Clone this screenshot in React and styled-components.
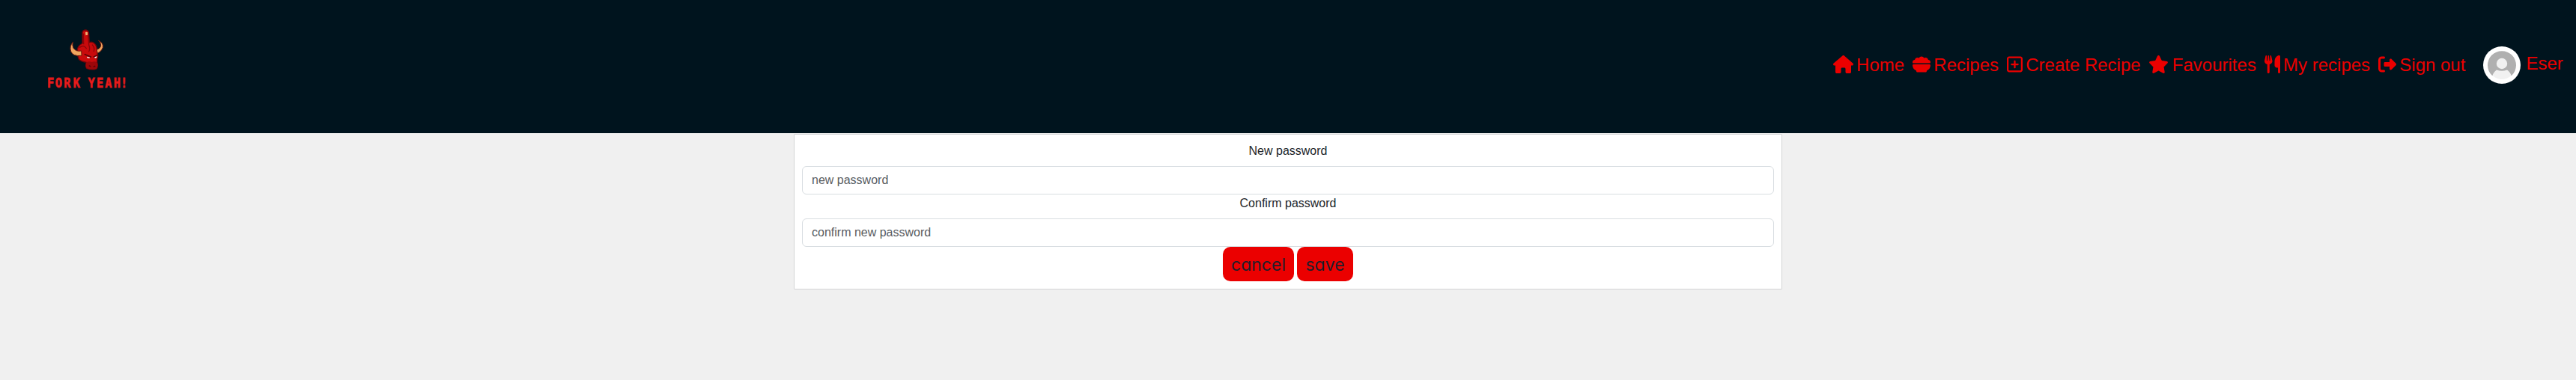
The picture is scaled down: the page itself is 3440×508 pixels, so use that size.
import React from 'react';
import styled, { createGlobalStyle } from 'styled-components';
import { FaHouse, FaBowlFood, FaRegSquarePlus, FaStar, FaUtensils, FaRightFromBracket } from 'react-icons/fa6';

const GlobalStyle = createGlobalStyle`
  *, *::before, *::after { box-sizing: border-box; }
  body {
    margin: 0;
    min-height: 100vh;
    background: #f0f0f0;
    color: #212529;
    font: 400 16px/24px "Liberation Sans", Arial, sans-serif;
  }
`;

const Header = styled.header`
  height: 178px;
  display: flex;
  justify-content: space-between;
  align-items: flex-start;
  background: #00141e;
  color: #eb0000;
`;

const LogoImage = styled.svg`
  width: 160px;
  height: 120px;
  margin: 20px 0 0 40px;
`;

const LogoText = styled.text`
  font: 700 18px "DejaVu Sans Mono", monospace;
  fill: #ed1c1c;
  stroke: #d5181a;
  stroke-width: 0.8px;
  text-anchor: middle;
`;

const Nav = styled.nav`
  display: flex;
  align-items: center;
  gap: 10.7px;
  height: 50px;
  margin: 62px 17.2px 0 0;
  font-size: 24px;
  line-height: 36px;
`;

const NavLink = styled.a`
  display: flex;
  align-items: center;
  gap: 4.5px;
  color: inherit;
  white-space: nowrap;

  svg {
    flex: none;
    width: ${(p) => p.$iconWidth}px;
    height: 24px;
    margin-bottom: 2px;
  }
`;

const Profile = styled.a`
  display: flex;
  align-items: center;
  gap: 7.4px;
  margin-left: 13px;
`;

const ProfileName = styled.span`
  padding-bottom: 4px;
`;

const Avatar = styled.svg`
  width: 50px;
  height: 50px;
`;

const Card = styled.form`
  width: 1320px;
  height: 208px;
  margin: 1px auto 0;
  padding: 10px;
  border: 1px solid #d3d4d5;
  border-radius: 1px;
  background: #fff;
  text-align: center;
`;

const Label = styled.label`
  display: block;
  margin-bottom: 8px;
`;

const Input = styled.input`
  display: block;
  width: 100%;
  height: 38px;
  padding: 6px 12px;
  border: 1px solid #d8dde1;
  border-radius: 6px;
  font: inherit;

  &::placeholder { color: #595c5f; opacity: 1; }
`;

const Actions = styled.div`
  display: flex;
  justify-content: center;
  gap: 4px;
`;

const Button = styled.button`
  width: ${(p) => p.$width}px;
  height: 46px;
  padding: 2px 0 0;
  border: 0;
  border-radius: 10px;
  background: #eb0000;
  color: #1e1e2a;
  font: 400 23px/44px Inter, sans-serif;
  font-feature-settings: "cv11";
`;

const links = [
  { label: 'Home', Icon: FaHouse, width: 27 },
  { label: 'Recipes', Icon: FaBowlFood, width: 24 },
  { label: 'Create Recipe', Icon: FaRegSquarePlus, width: 21 },
  { label: 'Favourites', Icon: FaStar, width: 27 },
  { label: 'My recipes', Icon: FaUtensils, width: 21 },
  { label: 'Sign out', Icon: FaRightFromBracket, width: 24 },
];

function Logo() {
  return (
    <LogoImage viewBox="0 0 160 120">
      <g transform="scale(.33333)" strokeLinejoin="round" strokeLinecap="round">
        {/* head with the raised finger */}
        <path
          d="M210 70Q212 60 224 60Q236 62 236 76L238 110Q250 106 258 114Q268 122 268 140L272 164Q268 178 269 190Q274 206 266 216Q246 222 227 214Q221 204 226 190Q206 188 196 178Q188 160 190 140Q192 122 210 114Z"
          fill="#c90a0c" stroke="#6d0509" strokeWidth="4"
        />
        <path d="M214 76L215 116M233 84L236 120Q242 138 236 146M200 130Q214 118 226 134M250 120Q260 130 256 146" fill="none" stroke="#8a0609" strokeWidth="4" />
        <path d="M222 70Q228 66 231 70V80L223 82Z" fill="#f0b070" />
        <path d="M226 190Q236 184 248 189Q260 184 269 191Q274 206 266 216Q246 222 227 214Q221 204 226 190Z" fill="#9c070a" />
        <path d="M220 158L244 168M272 160L256 168M238 204L242 206M260 206L256 207" stroke="#5c0407" strokeWidth="5" />
        <path d="M228 167L240 170L238 174L229 172ZM259 169L268 166L267 172L260 173Z" fill="#fff" />
        {/* horns */}
        <path d="M172 109Q157 126 164 146Q172 167 207 163L206 144Q184 148 174 133Q168 122 172 109Z" fill="#f0a55e" stroke="#6d1a10" strokeWidth="3" />
        <path d="M275 103Q295 112 292 130Q286 148 270 153L268 139Q284 134 284 120Q283 110 275 103Z" fill="#f0a55e" stroke="#6d1a10" strokeWidth="3" />
      </g>
      <LogoText transform="scale(.85 1)" x="32.5 45.1 58.8 73.5 85 96.7 110.2 123.3 136.8 147.9" y="96.6">FORK YEAH!</LogoText>
    </LogoImage>
  );
}

export default function App() {
  return (
    <>
      <GlobalStyle />
      <Header>
        <Logo />
        <Nav>
          {links.map(({ label, Icon, width }) => (
            <NavLink key={label} $iconWidth={width}><Icon />{label}</NavLink>
          ))}
          <Profile>
            <Avatar viewBox="0 0 50 50">
              <circle cx="25" cy="25" r="25" fill="#fff" />
              <path d="M12 39A19 19 0 1 1 38 39Z" fill="#b0b0b0" />
              <circle cx="25" cy="23" r="7.2" fill="#f1f1f1" />
              <path d="M12.5 39Q14 34 18 31.5Q25 34 32 31.5Q36 34 37.5 39Q32 44 25 44T12.5 39Z" fill="#f1f1f1" />
            </Avatar>
            <ProfileName>Eser</ProfileName>
          </Profile>
        </Nav>
      </Header>
      <Card>
        <Label htmlFor="new-password">New password</Label>
        <Input id="new-password" placeholder="new password" />
        <Label htmlFor="confirm-password">Confirm password</Label>
        <Input id="confirm-password" placeholder="confirm new password" />
        <Actions>
          <Button type="button" $width={95}>cancel</Button>
          <Button type="button" $width={75}>save</Button>
        </Actions>
      </Card>
    </>
  );
}
